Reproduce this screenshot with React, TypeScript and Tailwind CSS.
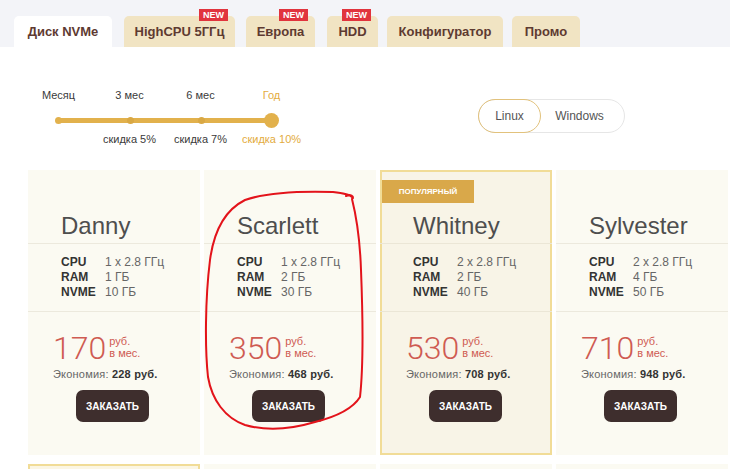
import React from "react";

interface Plan {
  name: string;
  cpu: string;
  ram: string;
  nvme: string;
  price: string;
  save: string;
  popular?: boolean;
}

const plans: Plan[] = [
  { name: "Danny", cpu: "1 x 2.8 ГГц", ram: "1 ГБ", nvme: "10 ГБ", price: "170", save: "228 руб." },
  { name: "Scarlett", cpu: "1 x 2.8 ГГц", ram: "2 ГБ", nvme: "30 ГБ", price: "350", save: "468 руб." },
  { name: "Whitney", cpu: "2 x 2.8 ГГц", ram: "2 ГБ", nvme: "40 ГБ", price: "530", save: "708 руб.", popular: true },
  { name: "Sylvester", cpu: "2 x 2.8 ГГц", ram: "4 ГБ", nvme: "50 ГБ", price: "710", save: "948 руб." },
];

const tabs = [
  { label: "Диск NVMe", w: "w-[98px]", active: true, isNew: false },
  { label: "HighCPU 5ГГц", w: "w-[111px] ml-[12px]", active: false, isNew: true },
  { label: "Европа", w: "w-[69px] ml-[11px]", active: false, isNew: true },
  { label: "HDD", w: "w-[51px] ml-[12px]", active: false, isNew: true },
  { label: "Конфигуратор", w: "w-[116px] ml-[9px]", active: false, isNew: false },
  { label: "Промо", w: "w-[68px] ml-[9px]", active: false, isNew: false },
];

const periods = [
  { top: "Месяц", bottom: "", on: false },
  { top: "3 мес", bottom: "скидка 5%", on: false },
  { top: "6 мес", bottom: "скидка 7%", on: false },
  { top: "Год", bottom: "скидка 10%", on: true },
];

function PlanCard({ plan }: { plan: Plan }) {
  const line = plan.popular ? "border-[#ebe6d6]" : "border-[#ece9dd]";
  return (
    <div
      className={
        plan.popular
          ? "relative h-[285px] bg-[#f8f4e7] border-2 border-[#f1dc97] px-[31px]"
          : "relative h-[285px] bg-[#fbfaf2] px-[33px]"
      }
    >
      {plan.popular && (
        <div className="absolute left-0 top-[8px] h-[23px] w-[92px] bg-[#d9a84a] text-white text-[8px] font-bold uppercase flex items-center justify-center">
          популярный
        </div>
      )}
      <div className={"-mx-[33px] px-[33px] pb-[3px] border-b " + line + (plan.popular ? " pt-[40px]" : " pt-[42px]")}>
        <div className="text-[24px] leading-[28px] text-[#4e4e4e]">{plan.name}</div>
      </div>
      <div className={"-mx-[33px] px-[33px] pt-[11px] pb-[11px] border-b text-[12px] leading-[15px] text-[#666] " + line}>
        <div className="flex">
          <span className="w-[44px] font-bold text-[#333]">CPU</span>
          <span>{plan.cpu}</span>
        </div>
        <div className="flex">
          <span className="w-[44px] font-bold text-[#333]">RAM</span>
          <span>{plan.ram}</span>
        </div>
        <div className="flex">
          <span className="w-[44px] font-bold text-[#333]">NVME</span>
          <span>{plan.nvme}</span>
        </div>
      </div>
      <div className={"flex flex-col pt-[20px] " + (plan.popular ? "-mx-[7px]" : "-mx-[8px]")}>
        <div className="flex items-start text-[#cf5b52]">
          <span className="text-[32px] leading-[32px] font-['Roboto'] font-light">{plan.price}</span>
          <span className="ml-[3px] mt-[3px] text-[11px] leading-[12px]">
            руб.
            <br />в мес.
          </span>
        </div>
        <div className="mt-[3px] text-[11px] leading-[14px] text-[#666] whitespace-nowrap tracking-[0.2px]">
          Экономия: <span className="font-bold text-[#333]">{plan.save}</span>
        </div>
        <button className="mt-[9px] ml-[23px] h-[32px] w-[73px] rounded-[7px] bg-[#3e2e2d] text-white text-[10px] font-bold">
          ЗАКАЗАТЬ
        </button>
      </div>
    </div>
  );
}

export default function App() {
  return (
    <div className="relative w-[730px] h-[469px] overflow-hidden bg-white font-['Liberation_Sans',Arial,sans-serif]">
      {/* tabs */}
      <div className="h-[47px] bg-[#f3f4f8] flex items-end pl-[14px]">
        {tabs.map((t) => (
          <div
            key={t.label}
            className={
              (t.active ? "bg-white " : "bg-[#f1e4c3] ") +
              t.w +
              " relative h-[31px] rounded-t-[5px] flex items-center justify-center text-[13px] font-bold text-[#5e3a31]"
            }
          >
            {t.label}
            {t.isNew && (
              <span className="absolute right-[7px] -top-[7px] h-[12px] px-[4px] bg-[#e1343d] text-white text-[9px] leading-[12px] font-bold">
                NEW
              </span>
            )}
          </div>
        ))}
      </div>

      {/* period + os */}
      <div className="h-[123px] flex items-start">
        <div className="ml-[23px] pt-[41px] grid grid-cols-[repeat(4,71px)] content-start">
          {periods.map((p) => (
            <div
              key={p.top}
              className={
                (p.on ? "text-[#e3ab3d] " : "text-[#3a3a3a] ") +
                "text-center text-[11px] leading-[14px]"
              }
            >
              {p.top}
            </div>
          ))}
          <div className="col-span-4 relative h-[30px]">
            <div className="absolute left-[35px] right-[34px] top-[16px] h-[5px] rounded-full bg-[#e2b14c]" />
            <div className="absolute left-[32px] top-[15px] w-[7px] h-[7px] rounded-full bg-[#e2b14c]" />
            <div className="absolute left-[104px] top-[15px] w-[7px] h-[7px] rounded-full bg-[#d9a844]" />
            <div className="absolute left-[175px] top-[15px] w-[7px] h-[7px] rounded-full bg-[#d9a844]" />
            <div className="absolute left-[241px] top-[11px] w-[15px] h-[15px] rounded-full bg-[#e2b14c]" />
          </div>
          {periods.map((p) => (
            <div
              key={p.top + "d"}
              className={
                (p.on ? "text-[#e3ab3d] " : "text-[#3a3a3a] ") +
                "text-center text-[11px] leading-[14px] whitespace-nowrap"
              }
            >
              {p.bottom}
            </div>
          ))}
        </div>
        <div className="ml-auto mr-[105px] mt-[52px] h-[34px] w-[147px] rounded-full border border-[#e6e6e6] flex items-center text-[12px] text-[#555]">
          <div className="h-[34px] w-[63px] -ml-px rounded-full border-[1.5px] border-[#e2c27c] flex items-center justify-center">
            Linux
          </div>
          <div className="flex-1 text-center pr-[6px]">Windows</div>
        </div>
      </div>

      {/* plans */}
      <div className="pl-[28px] grid grid-cols-[repeat(4,172px)] gap-x-[4px]">
        {plans.map((p) => (
          <PlanCard key={p.name} plan={p} />
        ))}
      </div>
      <div className="mt-[9px] pl-[28px] grid grid-cols-[repeat(4,172px)] gap-x-[4px]">
        <div className="h-[40px] bg-[#fbf6e4] border-2 border-[#f1dc97]" />
        <div className="h-[40px] bg-[#fbfaf2]" />
        <div className="h-[40px] bg-[#fbfaf2]" />
        <div className="h-[40px] bg-[#fbfaf2]" />
      </div>

      {/* hand-drawn marker */}
      <svg className="absolute left-0 top-0 pointer-events-none" width="730" height="469">
        <path
          d="M346 196 C350 194 355 196 352 199 C356 215 360 240 361 270 C363 320 363 370 360 397 C352 410 335 417 315 422 C295 428 270 432 245 425 C225 418 212 400 208 377 C205 350 205 300 210 260 C214 230 225 210 245 200 C265 193 300 191 333 192 C342 193 350 194 353 198"
          fill="none"
          stroke="#e3131b"
          strokeWidth="2"
          strokeLinecap="round"
        />
      </svg>
    </div>
  );
}
